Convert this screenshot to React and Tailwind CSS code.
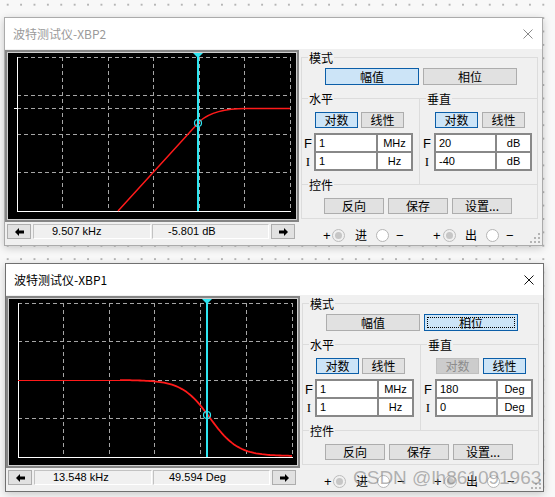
import React from 'react';

const CJK = "font-['Noto_Sans_CJK_SC','Noto_Sans',sans-serif]";
const SANS = "font-['Liberation_Sans','Noto_Sans_CJK_SC',sans-serif]";
const CYAN = '#2ee6f2';

const CloseIcon = ({ color }) => (
  <svg width="10" height="10" viewBox="0 0 10 10">
    <path d="M0.5 0.5 L9.5 9.5 M9.5 0.5 L0.5 9.5" stroke={color} strokeWidth="1" fill="none" />
  </svg>
);

const Arrow = ({ right }) => (
  <svg width="9" height="8" viewBox="0 0 9 8" className={right ? 'rotate-180' : ''}>
    <polygon points="0,4 4,0 4,2.5 9,2.5 9,5.5 4,5.5 4,8" fill="#000" />
  </svg>
);

const Grip = () => (
  <svg width="10" height="10" viewBox="0 0 10 10">
    <g fill="#b4b4b4">
      <rect x="8" y="0" width="2" height="2" />
      <rect x="4" y="4" width="2" height="2" />
      <rect x="8" y="4" width="2" height="2" />
      <rect x="0" y="8" width="2" height="2" />
      <rect x="4" y="8" width="2" height="2" />
      <rect x="8" y="8" width="2" height="2" />
    </g>
  </svg>
);

// 网格 + 坐标轴
function Grid({ xs, ys, right }) {
  return (
    <g>
      {xs.map((x) => (
        <line key={'x' + x} x1={x} y1="4" x2={x} y2="158" stroke="#a6a6a6" strokeDasharray="4 3" />
      ))}
      {ys.map((y) => (
        <line key={'y' + y} x1="9" y1={y} x2={right} y2={y} stroke="#a6a6a6" strokeDasharray="4 3" />
      ))}
      <line x1="9.5" y1="4" x2="9.5" y2="159" stroke="#fff" />
      <line x1="9" y1="158.5" x2={right} y2="158.5" stroke="#fff" />
    </g>
  );
}

function Cursor({ x, y }) {
  return (
    <g>
      <line x1={x} y1="0" x2={x} y2="158" stroke={CYAN} strokeWidth="2" />
      <polygon points={`${x - 5},0 ${x + 5},0 ${x},5`} fill={CYAN} />
      <circle cx={x} cy={y} r="3.5" fill="none" stroke={CYAN} strokeWidth="1.2" />
    </g>
  );
}

function MagPlot() {
  return (
    <svg width="288" height="166" className="block bg-black">
      <Grid xs={[54.5, 100.5, 145.5, 191.5, 236.5, 282.5]} ys={[4.5, 42.5, 55.5, 81.5, 119.5]} right={283} />
      <line x1="6" y1="55.5" x2="9" y2="55.5" stroke="#fff" />
      <path d="M110 158 L192 68 Q207 55 240 55.5 L282 55.5" fill="none" stroke="#ff1a1a" strokeWidth="1.5" />
      <Cursor x={190} y={70} />
    </svg>
  );
}

function PhasePlot() {
  const pts = [];
  for (let x = 111; x <= 283; x += 2) {
    pts.push(`${x},${(119 + 38 * Math.tanh((x - 201) / 28)).toFixed(1)}`);
  }
  return (
    <svg width="288" height="166" className="block bg-black">
      <Grid xs={[54.5, 100.5, 145.5, 191.5, 237.5, 283.5]} ys={[4.5, 42.5, 81.5, 119.5]} right={284} />
      <line x1="9" y1="81.5" x2="111" y2="81.5" stroke="#ff1a1a" strokeWidth="1" />
      <polyline points={pts.join(' ')} fill="none" stroke="#ff1a1a" strokeWidth="1.8" />
      <Cursor x={198} y={116} />
    </svg>
  );
}

function Btn({ size, state, focus, children }) {
  const look =
    state === 'on'
      ? 'border-[#0b5ea8] bg-[#cce4f7] text-black'
      : state === 'off'
        ? 'border-[#bfbfbf] bg-[#cccccc] text-[#8c8c8c]'
        : 'border-[#adadad] bg-[#e1e1e1] text-black';
  return (
    <div className={`relative flex items-center justify-center border text-[12px] leading-none ${CJK} ${size} ${look}`}>
      {focus && <div className="absolute inset-[2px] border border-dotted border-black" />}
      {children}
    </div>
  );
}

function Legend({ children }) {
  return (
    <div className={`-mt-[8px] ml-[6px] w-fit bg-[#f0f0f0] px-[1px] text-[12px] leading-[15px] text-black ${CJK}`}>
      {children}
    </div>
  );
}

function Fields({ w, lw, rows }) {
  return (
    <div className="mt-[5px] flex">
      <div className={`flex flex-col pt-[2px] ${lw}`}>
        <div className={`flex h-[18px] items-center justify-center text-[13px] ${SANS}`}>F</div>
        <div className="flex h-[18px] items-center justify-center font-['Liberation_Serif',serif] text-[13px]">I</div>
      </div>
      <div className={`grid grid-cols-[1fr_33px] gap-[2px] bg-[#888888] p-[2px] ${w}`}>
        {rows.map(([v, u], i) => (
          <React.Fragment key={i}>
            <div className={`flex h-[16px] items-center bg-white pl-[3px] text-[11px] text-black ${SANS}`}>{v}</div>
            <div className={`flex h-[16px] items-center justify-center bg-white text-[11px] text-black ${SANS}`}>{u}</div>
          </React.Fragment>
        ))}
      </div>
    </div>
  );
}

const RadioOn = () => (
  <span className="flex h-[13px] w-[13px] shrink-0 items-center justify-center rounded-full border border-[#bcbcbc] bg-[#f0f0f0]">
    <span className="block h-[7px] w-[7px] rounded-full bg-[#c6c6c6]" />
  </span>
);
const RadioOff = () => (
  <span className="block h-[13px] w-[13px] shrink-0 rounded-full border border-[#b5b5b5] bg-white" />
);

function Panel({ mode, focus, vert, vals }) {
  return (
    <div className="mt-[7px] ml-[2px] flex w-[237px] flex-col">
      {/* 模式 */}
      <div className="h-[41px] border-x border-t border-[#dcdcdc]">
        <Legend>模式</Legend>
        <div className="mt-[3px] ml-[23px] flex gap-[4px]">
          <Btn size="w-[94px] h-[17px]" state={mode === 'mag' ? 'on' : 'normal'}>幅值</Btn>
          <Btn size="w-[94px] h-[17px]" state={mode === 'phase' ? 'on' : 'normal'} focus={focus}>相位</Btn>
        </div>
      </div>
      {/* 水平 / 垂直 */}
      <div className="flex h-[86px] border-x border-t border-[#dcdcdc]">
        <div className="w-[117px]">
          <Legend>水平</Legend>
          <div className="mt-[6px] ml-[13px] flex gap-[3px]">
            <Btn size="w-[43px] h-[16px]" state="on">对数</Btn>
            <Btn size="w-[43px] h-[16px]" state="normal">线性</Btn>
          </div>
          <Fields w="w-[99px]" lw="w-[12px]" rows={[['1', 'MHz'], ['1', 'Hz']]} />
        </div>
        <div className="flex-1 border-l border-[#dcdcdc]">
          <Legend>垂直</Legend>
          <div className="mt-[6px] ml-[15px] flex gap-[4px]">
            <Btn size="w-[43px] h-[16px]" state={vert === 'log' ? 'on' : 'off'}>对数</Btn>
            <Btn size="w-[43px] h-[16px]" state={vert === 'log' ? 'normal' : 'on'}>线性</Btn>
          </div>
          <Fields w="w-[98px]" lw="w-[14px]" rows={vals} />
        </div>
      </div>
      {/* 控件 */}
      <div className="h-[35px] border border-[#dcdcdc]">
        <Legend>控件</Legend>
        <div className="mt-[6px] ml-[22px] flex gap-[4px]">
          <Btn size="w-[60px] h-[16px]" state="normal">反向</Btn>
          <Btn size="w-[60px] h-[16px]" state="normal">保存</Btn>
          <Btn size="w-[60px] h-[16px]" state="normal">设置...</Btn>
        </div>
      </div>
      {/* 进 / 出 */}
      <div className={`flex h-[26px] items-center pt-[6px] text-[13px] text-black ${SANS}`}>
        <span className="ml-[22px] w-[9px] leading-none">+</span>
        <RadioOn />
        <span className={`ml-[10px] w-[12px] text-[12px] leading-none ${CJK}`}>进</span>
        <span className="ml-[9px]"><RadioOff /></span>
        <span className="ml-[7px] w-[7px] leading-none">−</span>
        <span className="ml-[30px] w-[10px] leading-none">+</span>
        <RadioOn />
        <span className={`ml-[9px] w-[12px] text-[12px] leading-none ${CJK}`}>出</span>
        <span className="ml-[9px]"><RadioOff /></span>
        <span className="ml-[7px] w-[7px] leading-none">−</span>
      </div>
    </div>
  );
}

function Window({ title, active, plot, readA, readB, mode, focus, vert, vals, extra }) {
  return (
    <div
      className={`relative w-[539px] border bg-[#f0f0f0] shadow-[0_2px_8px_rgba(0,0,0,0.2)] ${
        active ? 'border-[#707070]' : 'border-[#ababab]'
      } ${extra}`}
    >
      <div className="flex h-[31px] items-center justify-between bg-white pl-[8px] pr-[9px]">
        <span className={`text-[12px] ${CJK} ${active ? 'text-black' : 'text-[#9a9a9a]'}`}>{title}</span>
        <CloseIcon color={active ? '#111' : '#8a8a8a'} />
      </div>
      <div className="flex pt-[1px]">
        <div className="flex flex-col">
          <div className="border-2 border-[#858585]">
            <div className="border border-[#cfcfcf]">{plot}</div>
          </div>
          <div className={`mt-[2px] ml-[2px] flex h-[15px] text-[11px] text-black ${SANS}`}>
            <div className="flex w-[24px] items-center justify-center border border-[#adadad] bg-[#e1e1e1]">
              <Arrow />
            </div>
            <div className="ml-[2px] flex w-[118px] items-center border border-[#c2c2c2] border-r-white border-b-white pl-[18px]">
              {readA}
            </div>
            <div className="ml-[1px] flex w-[117px] items-center border border-[#c2c2c2] border-r-white border-b-white pl-[15px]">
              {readB}
            </div>
            <div className="ml-[2px] flex w-[24px] items-center justify-center border border-[#adadad] bg-[#e1e1e1]">
              <Arrow right />
            </div>
          </div>
        </div>
        <Panel mode={mode} focus={focus} vert={vert} vals={vals} />
      </div>
      <div className="absolute right-[2px] bottom-[2px]">
        <Grip />
      </div>
    </div>
  );
}

export default function App() {
  return (
    <div className="relative h-[497px] w-[555px] overflow-hidden bg-[#f8f8f8] bg-[radial-gradient(circle,#b5b5b5_0.8px,transparent_1px)] bg-[length:13.4px_13.4px] bg-[position:1px_-2px] pt-[17px] pl-[4px]">
      <Window
        title="波特测试仪-XBP2"
        active={false}
        plot={<MagPlot />}
        readA="9.507 kHz"
        readB="-5.801 dB"
        mode="mag"
        vert="log"
        vals={[['20', 'dB'], ['-40', 'dB']]}
        extra=""
      />
      <Window
        title="波特测试仪-XBP1"
        active
        plot={<PhasePlot />}
        readA="13.548 kHz"
        readB="49.594 Deg"
        mode="phase"
        focus
        vert="lin"
        vals={[['180', 'Deg'], ['0', 'Deg']]}
        extra="mt-[17px] ml-[1px]"
      />
      {/* 水印 */}
      <div className="pointer-events-none absolute top-[468px] left-[353px] font-['Liberation_Sans',sans-serif] text-[19px] leading-none text-[rgba(120,120,120,0.55)]">
        CSDN @lh861091963
      </div>
    </div>
  );
}
